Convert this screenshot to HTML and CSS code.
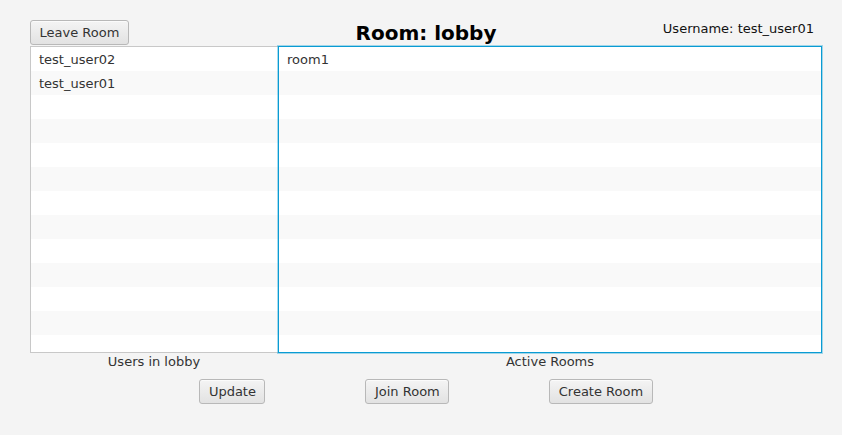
FILE: index.html
```html
<!DOCTYPE html>
<html>
<head>
<meta charset="utf-8">
<link rel="stylesheet" href="styles.css">
</head>
<body>
<div class="app">
  <div class="top">
    <div class="top-left"><button class="btn">Leave Room</button></div>
    <div class="title">Room: lobby</div>
    <div class="user">Username: test_user01</div>
  </div>
  <div class="lists">
    <div class="list users">
      <div class="row">test_user02</div>
      <div class="row">test_user01</div>
      <div class="row"></div><div class="row"></div><div class="row"></div>
      <div class="row"></div><div class="row"></div><div class="row"></div>
      <div class="row"></div><div class="row"></div><div class="row"></div>
      <div class="row"></div><div class="row"></div>
    </div>
    <div class="list rooms">
      <div class="row">room1</div>
      <div class="row"></div><div class="row"></div><div class="row"></div>
      <div class="row"></div><div class="row"></div><div class="row"></div>
      <div class="row"></div><div class="row"></div><div class="row"></div>
      <div class="row"></div><div class="row"></div><div class="row"></div>
    </div>
  </div>
  <div class="captions">
    <div class="cap users-cap">Users in lobby</div>
    <div class="cap rooms-cap">Active Rooms</div>
  </div>
  <div class="actions">
    <button class="btn">Update</button>
    <button class="btn">Join Room</button>
    <button class="btn">Create Room</button>
  </div>
</div>
</body>
</html>
```

FILE: styles.css
```css
html, body {
  margin: 0;
  padding: 0;
  background: #f4f4f4;
}
body {
  font-family: "DejaVu Sans", sans-serif;
  font-size: 13px;
  color: #333333;
}
.app {
  padding: 20px 20px 0 30px;
}
.top {
  display: grid;
  grid-template-columns: 1fr auto 1fr;
  height: 26px;
}
.top-left {
  display: flex;
  align-items: flex-start;
}
.title {
  font-weight: bold;
  font-size: 20px;
  line-height: 23px;
  color: #000;
  padding-top: 2px;
  white-space: nowrap;
}
.user {
  justify-self: end;
  padding-top: 1px;
  padding-right: 8px;
  line-height: 15px;
  color: #111;
}
.btn {
  font-family: "DejaVu Sans", sans-serif;
  font-size: 13px;
  color: #333333;
  height: 25px;
  box-sizing: border-box;
  padding: 0 8.5px;
  border: 1px solid #b8b8b8;
  border-radius: 3px;
  background: linear-gradient(#f4f4f4, #e2e2e2);
  box-shadow: inset 0 1px 0 #fbfbfb;
  margin: 0;
  line-height: 23px;
}
.lists {
  display: flex;
  height: 307px;
}
.list {
  box-sizing: border-box;
  height: 307px;
  overflow: hidden;
  background: #fff;
}
.users {
  width: 248px;
  border: 1px solid #c8c8c8;
  border-right: none;
}
.rooms {
  width: 544px;
  border: 1px solid #0a9bd3;
  box-shadow: 0 0 0 1px rgba(3, 158, 211, 0.35);
}
.row {
  height: 22px;
  padding-top: 2px;
  line-height: 22px;
  padding-left: 8px;
  color: #333;
}
.row:nth-child(even) {
  background: #f9f9f9;
}
.captions {
  display: flex;
  line-height: 15px;
  height: 15px;
  padding-top: 1px;
}
.cap {
  text-align: center;
  color: #333;
}
.users-cap { width: 248px; }
.rooms-cap { width: 544px; }
.actions {
  display: flex;
  justify-content: center;
  gap: 100px;
  margin-top: 10px;
}
```
